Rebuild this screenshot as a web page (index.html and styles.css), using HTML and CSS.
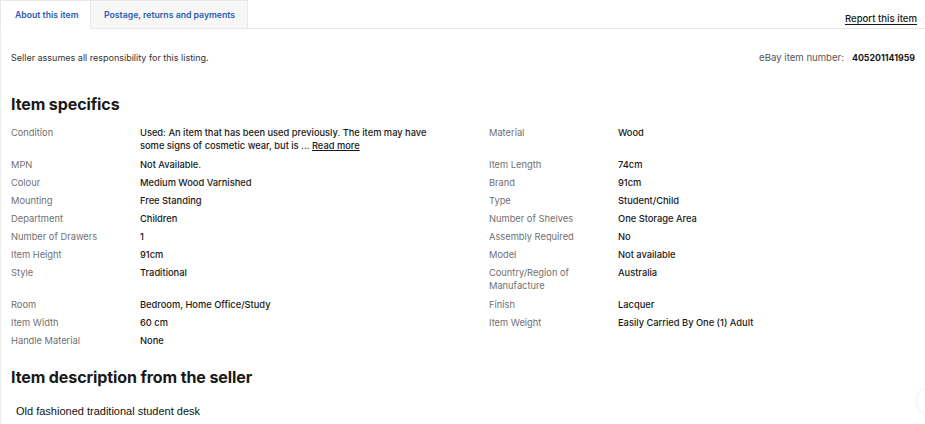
FILE: index.html
```html
<!DOCTYPE html>
<html lang="en">
<head>
<meta charset="utf-8">
<title>About this item</title>
<link rel="stylesheet" href="styles.css">
</head>
<body>
<div class="page">
  <div class="tabbar">
    <div class="tab tab--active">About this item</div>
    <div class="tab">Postage, returns and payments</div>
    <div class="tabbar__fill"><a class="report" href="#">Report this item</a></div>
  </div>

  <div class="panel">
    <div class="meta">
      <span class="meta__note">Seller assumes all responsibility for this listing.</span>
      <span class="meta__num"><span class="meta__label">eBay item number:</span><b>405201141959</b></span>
    </div>

    <h2 class="heading">Item specifics</h2>

    <dl class="specs">
      <dt>Condition</dt>
      <dd class="wrap">Used: An item that has been used previously. The item may have some signs of cosmetic wear, but is ... <a href="#">Read more</a></dd>
      <dt>Material</dt><dd>Wood</dd>

      <dt>MPN</dt><dd>Not Available.</dd>
      <dt>Item Length</dt><dd>74cm</dd>

      <dt>Colour</dt><dd>Medium Wood Varnished</dd>
      <dt>Brand</dt><dd>91cm</dd>

      <dt>Mounting</dt><dd>Free Standing</dd>
      <dt>Type</dt><dd>Student/Child</dd>

      <dt>Department</dt><dd>Children</dd>
      <dt>Number of Shelves</dt><dd>One Storage Area</dd>

      <dt>Number of Drawers</dt><dd>1</dd>
      <dt>Assembly Required</dt><dd>No</dd>

      <dt>Item Height</dt><dd>91cm</dd>
      <dt>Model</dt><dd>Not available</dd>

      <dt>Style</dt><dd>Traditional</dd>
      <dt class="narrow">Country/Region of Manufacture</dt><dd>Australia</dd>

      <dt>Room</dt><dd>Bedroom, Home Office/Study</dd>
      <dt>Finish</dt><dd>Lacquer</dd>

      <dt>Item Width</dt><dd>60 cm</dd>
      <dt>Item Weight</dt><dd>Easily Carried By One (1) Adult</dd>

      <dt>Handle Material</dt><dd>None</dd>
    </dl>

    <h2 class="heading heading--desc">Item description from the seller</h2>
    <p class="desc">Old fashioned traditional student desk</p>
  </div>

  <div class="to-top" aria-hidden="true"></div>
</div>
</body>
</html>
```

FILE: styles.css
```css
* { box-sizing: border-box; }

html, body {
  margin: 0;
  background: #fff;
}

body {
  font-family: Inter, "Open Sans", Arial, sans-serif;
  color: #191919;
  overflow: hidden;
}

.page {
  position: relative;
  width: 925px;
  height: 424px;
}

/* tabs */
.tabbar {
  display: flex;
  height: 29px;
}

.tab {
  height: 29px;
  padding: 0 12px 0 13px;
  display: flex;
  align-items: center;
  font-size: 8.7px;
  font-weight: 600;
  color: #2c5cb0;
  background: #f7f7f7;
  border: 1px solid #e8e8e8;
  border-left: 0;
  white-space: nowrap;
}

.tab--active {
  background: #fff;
  border-left: 1px solid #e8e8e8;
  border-bottom-color: #fff;
  width: 91px;
  padding-left: 14px;
}

.tabbar__fill {
  flex: 1;
  border-bottom: 1px solid #e8e8e8;
  display: flex;
  justify-content: flex-end;
  align-items: flex-end;
  padding: 0 8px 4px 0;
}

.report {
  font-size: 9.6px;
  font-weight: 500;
  color: #191919;
  text-decoration: underline;
  text-underline-offset: 1.5px;
}

/* content panel */
.panel {
  border-left: 1px solid #ececec;
  padding: 22px 10px 0 10px;
  height: 395px;
}

.meta {
  display: flex;
  justify-content: space-between;
  font-size: 9px;
  line-height: 13px;
  color: #333;
}

.meta__num {
  font-size: 9.6px;
}

.meta__label {
  color: #555;
  margin-right: 8px;
}

.meta__num b {
  font-size: 8.8px;
  font-weight: 700;
  color: #191919;
}

.heading {
  margin: 29px 0 0;
  font-size: 16px;
  line-height: 22px;
  font-weight: 700;
  letter-spacing: -0.1px;
}

.heading--desc {
  margin-top: 19px;
}

.specs {
  margin: 11px 0 0;
  display: grid;
  grid-template-columns: 129px 349px 129px 1fr;
  row-gap: 5px;
  font-size: 9.3px;
  line-height: 13px;
}

.specs dt {
  color: #707070;
}

.specs dd {
  margin: 0;
  font-weight: 500;
  color: #191919;
}

.specs dd.wrap {
  max-width: 300px;
  padding-bottom: 1px;
}

.specs dt.narrow {
  max-width: 100px;
  padding-bottom: 1px;
}

.specs a {
  color: #191919;
  text-decoration: underline;
}

.desc {
  margin: 17px 0 0 5px;
  font-family: "Liberation Sans", Arial, sans-serif;
  font-size: 11px;
  line-height: 13px;
  color: #111;
}

/* floating back-to-top button, mostly off-screen */
.to-top {
  position: absolute;
  left: 917px;
  top: 388px;
  width: 26px;
  height: 26px;
  border-radius: 50%;
  background: #fff;
  box-shadow: 0 0 3px rgba(0, 0, 0, 0.12);
}
```
